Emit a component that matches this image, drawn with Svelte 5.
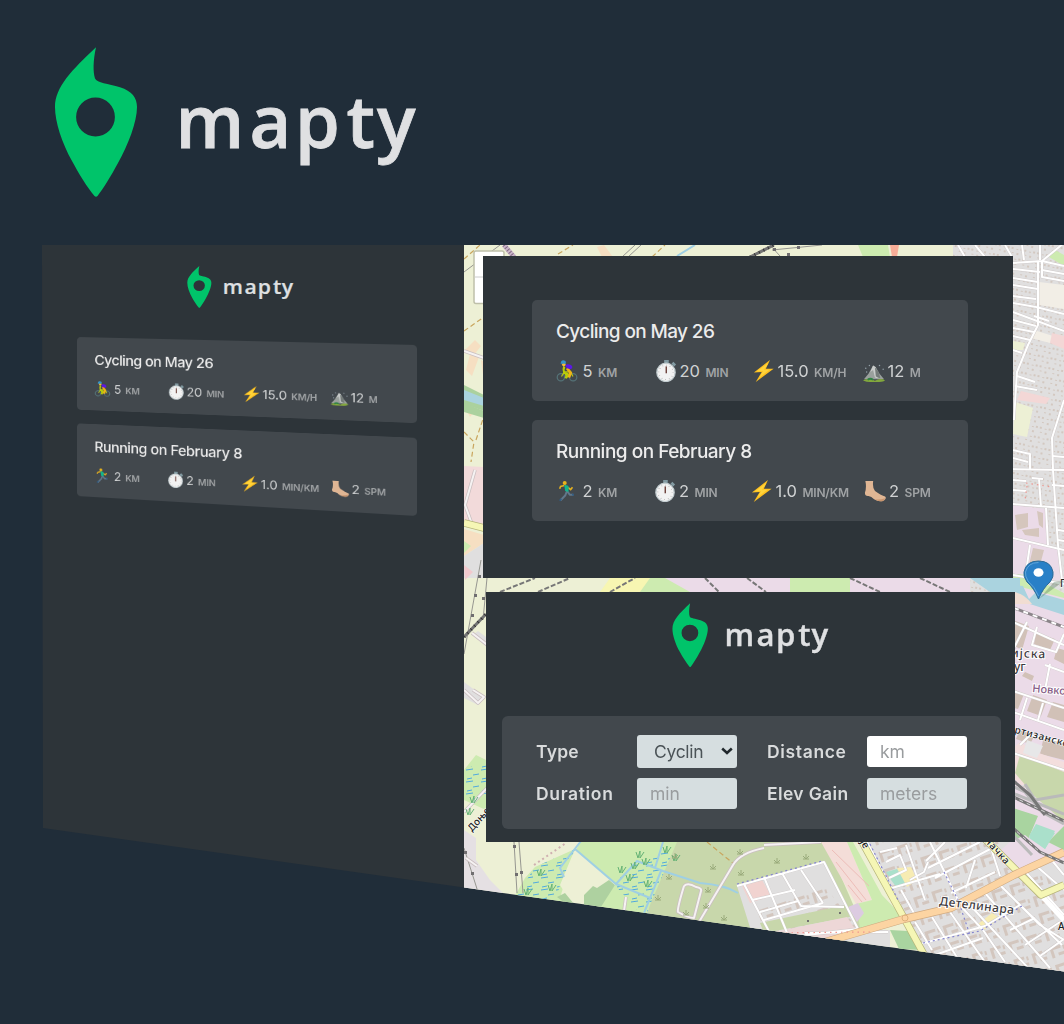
<script>
  const workouts = [
    {
      title: 'Cycling on May 26',
      stats: [
        { icon: 'bike', value: '5', unit: 'km' },
        { icon: 'watch', value: '20', unit: 'min' },
        { icon: 'bolt', value: '15.0', unit: 'km/h' },
        { icon: 'peak', value: '12', unit: 'm' }
      ]
    },
    {
      title: 'Running on February 8',
      stats: [
        { icon: 'run', value: '2', unit: 'km' },
        { icon: 'watch', value: '2', unit: 'min' },
        { icon: 'bolt', value: '1.0', unit: 'min/km' },
        { icon: 'foot', value: '2', unit: 'spm' }
      ]
    }
  ];

  // Minor streets of the map, in map coordinates
  const streets = [
    'M1013 263L1042 261L1064 243M1042 261L1064 266M1038 261L1038 325L1028 345L1017 372L1014 420',
    'M1013 269L1040 272M1013 278L1038 282M1013 285L1038 289M1013 296L1036 299M1013 303L1036 307M1013 312L1064 331M1013 320L1036 326M1013 328L1034 332M1013 336L1030 340M1013 350L1022 353',
    'M1042 262L1042 277L1064 281M1042 270L1064 274M1036 307L1064 314M1034 316L1049 321M1017 376L1035 382M1015 386L1037 390M1064 400L1052 438L1053 470L1058 545L1062 580',
    'M1013 450L1030 454L1030 469M1013 458L1028 462M1005 469L1064 470M1052 456L1064 457M1013 480L1026 481M1013 490L1026 491M1032 478L1043 479M1039 479L1041 507M1013 504L1064 508M1052 485L1064 486M1046 508L1048 545M1013 538L1064 550M1058 530L1064 531M1058 540L1064 541M1013 575L1064 584M1030 545L1026 572',
    'M958 245L965 257M975 245L985 257M1005 245L1012 257M1022 245L1024 260M1040 245L1040 260',
    'M1013 622L1064 645M1037 627L1032 645L1056 652L1064 634M1045 665L1064 672M1050 664L1045 690M1010 690L1064 708M1027 622L1013 650M1013 712L1064 730M1027 698L1020 720M1043 703L1038 720M1010 752L1064 770M1020 745L1030 735L1064 742',
    'M737 886L824 862L858 929L764 940M744 884L784 960M764 877L790 940M782 873L801 906L844 907M801 870L823 903M752 900L795 890M760 912L798 901M764 920L823 903M805 933L888 932',
    'M867 842L900 905M880 852L897 848M886 862L900 855L906 870L889 878M906 845L925 900M892 888L940 874M901 890L915 915L950 906M910 880L924 872L928 862M930 842L958 900M945 842L926 861M928 868L980 842M935 878L994 847M951 893L995 872M966 888L975 860M989 842L1000 876M955 900L983 930L1005 962',
    'M915 922L932 950M932 917L958 959M950 912L987 965M921 944L985 926L1020 905M935 955L983 938M968 903L1030 970M985 893L1050 968M1000 885L1040 925L1064 940M1020 905L1062 945M1010 930L1035 918M1025 945L1060 922M1040 956L1064 939M1024 870L1064 915M1034 864L1064 890M1050 858L1064 875'
  ];

  const marsh = [
    [640, 855], [646, 862], [635, 866], [622, 870], [630, 878], [648, 884], [667, 850], [676, 858], [541, 873], [552, 888], [528, 892], [474, 800], [470, 812]
  ];
  const shrubs = [[675, 856], [713, 867], [740, 852], [741, 873], [669, 877], [658, 898], [708, 890], [706, 906], [724, 918], [777, 861], [806, 857], [686, 913]];
</script>

{#snippet logo(kind)}
  <svg class="logo {kind}" viewBox="0 0 366 152" preserveAspectRatio="none" role="img" aria-label="mapty">
    <path fill="#00c46a" fill-rule="evenodd" d="M42 .3C39 14 39 25 41 31.500C43 36 54 36.500 66 40.300C78 44 83 51 83 60C83 75 74 98 64 116C57 129 49 142 43.500 149Q42 150.500 40.500 149C33 140 25 127 18 114C8 96 1 75 1 60C1 40 18 23 42 .3ZM41.500 50.600a19.400 19.400 0 1 0 0 38.800a19.400 19.400 0 1 0 0-38.800Z" />
    <text x="121.500 195.500 241 292.500 323" y="101.200">mapty</text>
  </svg>
{/snippet}

{#snippet glyph(name)}
  <svg class="glyph" viewBox="0 0 24 24" aria-hidden="true">
    {#if name === 'bike'}
      <g fill="none" stroke="#567479" stroke-width="1.300"><circle cx="5.300" cy="18.800" r="4" /><circle cx="18.700" cy="18.800" r="4" /></g>
      <path d="M6 18L9 13L16 13L18.500 18M9 13L12 19L16 13" fill="none" stroke="#b9c51b" stroke-width="1.300" />
      <path d="M9 7Q7.500 10 9 14L12.500 15L10.500 20" fill="none" stroke="#b9cc08" stroke-width="2.500" stroke-linejoin="round" />
      <path d="M12 9L16 14L14 19" fill="none" stroke="#f0b414" stroke-width="3" />
      <path d="M10 6Q13 3 17 6Q19 8.500 16 10L12 9Z" fill="#5b16e8" />
      <circle cx="8.500" cy="5" r="2" fill="#f5b93e" /><path d="M5 4Q5.500-.5 9 .5Q11.500 1 10.500 4Z" fill="#3596c9" />
    {:else if name === 'run'}
      <path d="M12 12L10 17L5 22M12 12L15 16L19 16" fill="none" stroke="#61778b" stroke-width="2.200" stroke-linejoin="round" />
      <path d="M4 22.500L6 20.500M18 15L19 17" stroke="#2e5e88" stroke-width="1.600" />
      <path d="M9 6L5 7L4 9.500M13 8L16 10.500L18 8" fill="none" stroke="#e2af20" stroke-width="1.800" />
      <path d="M9 5.500Q13 5 14 7.500L13.500 13L10 12Z" fill="#14b38b" />
      <circle cx="9.500" cy="3.200" r="2.200" fill="#e8b31c" />
    {:else if name === 'watch'}
      <path d="M10 0h5v4h-5zM20 2l3 3-2 2-3-3z" fill="#829aa2" />
      <circle cx="12" cy="13.500" r="10" fill="#f2f2f2" stroke="#c4ced1" stroke-width="1.400" />
      <circle cx="12" cy="13.500" r="7.800" fill="none" stroke="#a9a9a9" stroke-width="1.200" stroke-dasharray=".7 3.380" />
      <path d="M12.300 7v7.500" stroke="#70453f" stroke-width="1.600" />
    {:else if name === 'bolt'}
      <path d="M18.500 0L1 13.500L9.500 13L3 24L22.500 9.500L14 9.500Z" fill="#fec01f" />
      <path d="M17 3L4 12.500L11 12L7 19L18 10.500L12 10.500Z" fill="#ffd43b" />
    {:else if name === 'peak'}
      <path d="M1 21L6 15L11 6L14 8L18 15L23 21Z" fill="#9aa09d" />
      <path d="M11 6L8 13L11 11L13 19L16 20L14 8Z" fill="#c9cccb" /><path d="M13 8L14 18L19 20L17 13Z" fill="#747b79" />
      <path d="M0 22Q7 19 13 22.500Q19 19 24 22Q22 24.500 12 24Q2 24 0 22Z" fill="#83a83d" />
      <path d="M5 21.500Q8 19.500 11 21.500" stroke="#2f8243" stroke-width="2" fill="none" />
      <g fill="#93a0a8"><circle cx="3" cy="9" r=".8" /><circle cx="7" cy="6" r=".8" /><circle cx="18" cy="6" r=".8" /><circle cx="22" cy="10" r=".8" /><circle cx="4" cy="13" r=".8" /></g>
    {:else}
      <path d="M1.500 1L10 1Q9 9 12 12Q19 17 23 18Q25 20 22 22Q17 25 11 21Q8 18 5 17.500Q1 18 1 14Q3 8 1.500 1Z" fill="#e0b694" />
      <path d="M12 21Q17 25 22 22L23 20Q17 22 12 21Z" fill="#c9956f" />
    {/if}
  </svg>
{/snippet}

{#snippet workoutList()}
  <ul class="workouts">
    {#each workouts as workout}
      <li class="workout">
        <h2>{workout.title}</h2>
        <div class="stats">
          {#each workout.stats as stat}
            <div class="stat">
              {@render glyph(stat.icon)}
              <span class="value">{stat.value}</span>
              <span class="unit">{stat.unit}</span>
            </div>
          {/each}
        </div>
      </li>
    {/each}
  </ul>
{/snippet}

<main class="page">
  <header class="brand">{@render logo('large')}</header>

  <section class="scene">
    <aside class="sidebar">
      {@render logo('small')}
      <div class="tilted">{@render workoutList()}</div>
    </aside>

    <svg class="map" viewBox="464 245 600 727" aria-label="Map">
      <defs>
        <pattern id="houses" width="13" height="10" patternUnits="userSpaceOnUse" patternTransform="rotate(12)">
          <path d="M1 1h2v2h-2zM6 2h2v1h-2zM10 1h2v2h-2zM2 6h2v1h-2zM7 6h2v2h-2z" fill="#d3c8c0" />
        </pattern>
        <pattern id="blocks" width="19" height="18" patternUnits="userSpaceOnUse" patternTransform="rotate(-18)">
          <path d="M2 2h11v3h-8v8h-3zM9 9h7v3h-7zM15 3h2v4h-2z" fill="#d3c6be" />
        </pattern>
        <pattern id="reeds" width="15" height="12" patternUnits="userSpaceOnUse">
          <path d="M1 2l7-1M8 7l6-1M2 11l5-1" stroke="#4fa9df" stroke-width="1" />
        </pattern>
      </defs>

      <!-- Land cover -->
      <rect x="464" y="245" width="600" height="727" fill="#edf0d5" />
      <path d="M858 245H888L890 257H863Z" fill="#cdebb0" /><path d="M890 245H899L897 257H892Z" fill="#f7ad98" />
      <path d="M597 247L604 245L613 257H602ZM465 350L475 340L481 346L474 355ZM466 370L470 354L479 357L472 376ZM481 360L484 362V382ZM464 405L483 415L476 410L470 417Z" fill="#f6dfc2" />
      <path d="M464 385L484 395V411L464 404Z" fill="#abd19e" /><path d="M464 403L484 411V418L464 412Z" fill="#abd19e" /><path d="M464 390L484 398V406L464 400Z" fill="#aad3df" />
      <path d="M464 466L484 467V526L464 521Z" fill="#f2dada" /><path d="M464 529L484 535V543L464 556Z" fill="#f6dfc2" />
      <path d="M464 556L484 543V578H464Z" fill="#e0dfdf" /><path d="M464 541L471 546L464 553Z" fill="#cdebb0" /><path d="M464 565L473 572L465 580Z" fill="#f2c9cd" />
      <path d="M473 635L478 631L490 640V650ZM464 682L484 697L478 705L464 698Z" fill="#e0dfdf" />
      <path d="M953 245H1064V972H953Z" fill="#e0dfdf" /><path d="M953 245H1064V972H953Z" fill="url(#houses)" />
      <path d="M1039 282L1064 285V309L1039 305ZM1034 330L1053 336L1050 343L1031 338Z" fill="#f2eee6" />
      <path d="M1052 333L1064 336V349L1050 343ZM1021 391L1050 398L1046 404L1017 400Z" fill="#f3d7d6" />
      <path d="M1015 402L1033 408L1027 437L1013 434ZM1013 341L1025 343L1023 350H1013Z" fill="#edf0d5" />
      <path d="M1005 504L1046 509L1048 545L1058 548L1064 580H1005Z" fill="#ebdbe8" />
      <path d="M1055 250L1064 255V266L1049 257Z" fill="#cdebb0" />
      <path d="M1015 515L1028 513V527L1017 530ZM1037 511L1043 513V528L1039 525ZM1022 530L1039 528V537L1025 535ZM1033 548L1044 550L1040 565H1029Z" fill="#d5c6bd" />
      <path d="M1005 578L1064 592V770H1005Z" fill="#ebdbe8" />
      <path d="M1005 573L1028 575L1064 593V598L1005 583Z" fill="#cdebb0" />
      <path d="M1005 584L1023 586L1029 599L1036 592L1064 600V615L1005 596Z" fill="#aad3df" />
      <path d="M1013 592Q1024 593 1032 604L1013 604Z" fill="#f1ddd2" />
      <g fill="#d1c1b7">
        <path d="M1013 620L1029 626L1022 650L1013 645ZM1036 633L1055 639L1050 650L1034 644ZM1057 648L1064 650V664L1054 659ZM1015 690L1024 694L1018 709L1010 707ZM1033 695L1047 700L1041 716L1027 711ZM1053 702L1064 705V722L1047 717ZM1020 730L1035 735L1030 744L1016 739ZM1044 736L1064 742V760L1040 754Z" />
        <path d="M1025 672L1034 676L1032 681L1022 676ZM1015 768L1025 773L1021 778L1012 773Z" />
      </g>
      <path d="M1013 748L1020 742L1036 752L1064 762V785H1013Z" fill="#f3dedd" />
      <path d="M1027 740L1043 746L1037 758L1023 753Z" fill="#e7e7e8" />
      <path d="M1020 755L1064 772V826L1038 800L1015 773Z" fill="#c8d7ab" />
      <path d="M1010 775L1064 822V865H1010Z" fill="#ebdbe8" />
      <path d="M1013 808L1038 816L1027 842L1013 850ZM1048 842L1064 850V826Z" fill="#a9d4a0" />
      <path d="M1036 824L1055 831L1045 849L1029 836Z" fill="#aae0cb" />

      <!-- Strip between the panels -->
      <path d="M640 578H760L770 592H600ZM780 578H850V592H770Z" fill="#cdebb0" />
      <path d="M610 578H650L640 592H600Z" fill="#f7f6b2" /><path d="M665 578H790V592H690ZM850 578H970V592H850Z" fill="#ebdbe8" />
      <path d="M970 578H1020V592H990Z" fill="#aad3df" />
      <path d="M500 592L535 578M538 592L570 578M610 592L635 578M705 578L719 592M747 578L766 592M850 578L880 592M920 578L950 592" fill="none" stroke="#777" stroke-width="2" stroke-dasharray="5 2" />

      <!-- Southern fields and blocks -->
      <path d="M464 830L476 838V860L490 880L510 900H464Z" fill="#e5e0e3" />
      <path d="M464 770L476 755L486 760V810L464 800Z" fill="#cdebb0" /><path d="M464 770L486 760V800H464Z" fill="url(#reeds)" />
      <path d="M580 842H680L675 860L640 925L590 910L616 884L576 850ZM535 867L575 849L560 885L568 898L553 910H507L525 878Z" fill="#cdebb0" />
      <path d="M575 849L616 884L584 897L560 898Z" fill="#edf0d5" />
      <path d="M636 862L690 842L672 858L646 920L614 884ZM535 867L575 849L560 885L553 910H507Z" fill="url(#reeds)" />
      <path d="M584 903V895L593 886L597 888L609 880L615 885L599 910L584 906ZM557 897L565 893L574 904V910Z" fill="#aed1a0" />
      <path d="M677 842H826L862 925V960H630L650 905Z" fill="#c8d7ab" />
      <path d="M737 886L824 862L858 929L890 930V972H764Z" fill="#e0dfdf" />
      <path d="M742 886L762 880L771 896L750 903Z" fill="#f1d3d0" /><path d="M752 905L824 885L858 929L770 945Z" fill="url(#blocks)" />
      <path d="M760 923L846 905L850 917L764 933Z" fill="#c8d7ab" /><path d="M775 932L847 917L855 929L820 945Z" fill="#edd7d7" />
      <path d="M821 842H847L872 900L856 904Z" fill="#f4ddd8" />
      <path d="M847 842H853L882 895L903 917L860 928L856 904L872 900Z" fill="#cdebb0" />
      <path d="M867 842H1012L1055 865L1064 860V972H930L904 915Z" fill="#e0dfdf" /><path d="M867 842H1012L1064 895V972H930L904 915Z" fill="url(#blocks)" />
      <path d="M1010 842L1025 835L1050 855L1012 872L995 855Z" fill="#ebdbe8" />
      <path d="M1036 828L1055 833L1045 849L1029 838Z" fill="#aae0cb" />
      <path d="M886 872L897 869L907 884L897 888L891 880Z" fill="#aae0cb" /><path d="M897 868L911 867L917 880L907 887Z" fill="#f7ecb3" />
      <path d="M978 924L992 913L1000 918L984 930Z" fill="#f7ecb3" />
      <path d="M890 930L908 931L922 950L899 949Z" fill="#a9d4a0" />
      <path d="M848 907L858 903L864 913L857 922Z" fill="#dccbe1" />
      <path d="M832 850L869 886M836 862L866 900M848 885L862 902" fill="none" stroke="#edbdb8" />

      <!-- Waterways and paths -->
      <path d="M581 841L560 868L564 877M575 849L616 884L637 861L663 871L700 883Q725 885 738 893M616 884L650 898M663 842L655 868M661 871L644 913M677 256L695 245" fill="none" stroke="#9fcfe3" stroke-width="2" />
      <path d="M464 331L484 317M464 259L480 245M558 254L573 245M652 257L665 245M707 842L734 864M464 432L474 442L471 462M476 440L483 419" fill="none" stroke="#c9a55d" stroke-width="1.200" stroke-dasharray="5 3" />
      <path d="M534 865L566 843" stroke="#cfafb0" stroke-width="2" stroke-dasharray="2 3" />
      <path d="M464 272L500 245M622 257L635 245M628 257L641 245M770 245L780 256M772 250L822 245M464 654L481 560M483 620L487 578M514 842L517 893M519 842L523 893M464 848L478 892" fill="none" stroke="#969690" stroke-width="1" />
      <g fill="#706e70"><path d="M773 248h3v3h-3zM797 246h3v3h-3zM787 253h3v3h-3zM478 575h3v3h-3zM474 594h3v3h-3zM471 614h3v3h-3zM482 597h3v3h-3zM513 845h3v3h-3zM515 873h3v3h-3zM520 871h3v3h-3zM464 851h3v3h-3zM471 872h3v3h-3zM807 920h2v2h-2zM839 912h2v2h-2z" /></g>
      <path d="M750 257L774 245M464 637L486 614" stroke="#747474" stroke-width="3" /><path d="M750 257L774 245M464 637L486 614" stroke="#333" stroke-width="3" stroke-dasharray="1 4" />
      <path d="M504 245L514 257" stroke="#cab4c8" stroke-width="5" /><path d="M504 245L514 257" stroke="#806a80" stroke-width="4" stroke-dasharray="1 2" />
      <g fill="none" stroke-linejoin="round">
        <path d="M464 351L484 358M475 470L465 505L472 524M473 690L484 697L478 703L464 690M472 633L490 647M464 812L490 785M466 858L477 866M684 886Q688 882 696 887Q702 888 701 891L694 918Q688 918 678 912Q677 909 684 886M764 848Q740 853 733 865L699 922M764 845L821 842M626 897L624 911" stroke="#cabfc0" stroke-width="3.500" />
        <path d="M464 351L484 358M475 470L465 505L472 524M473 690L484 697L478 703L464 690M472 633L490 647M464 812L490 785M466 858L477 866M684 886Q688 882 696 887Q702 888 701 891L694 918Q688 918 678 912Q677 909 684 886M764 848Q740 853 733 865L699 922M764 845L821 842M626 897L624 911" stroke="#f5f2f2" stroke-width="2" />
        {#each streets as d}
          <path {d} stroke="#cfcaca" stroke-width="2.800" />
        {/each}
        {#each streets as d}
          <path {d} stroke="#fff" stroke-width="2" />
        {/each}
        <path d="M1064 920L1041 895" stroke="#fff" stroke-width="5" />
        <path d="M464 523L484 528M861 840L904 918L927 960M984 838L1041 895L1064 885" stroke="#b6b579" stroke-width="7.500" />
        <path d="M464 523L484 528M861 840L904 918L927 960M984 838L1041 895L1064 885" stroke="#f5f6b5" stroke-width="6" />
        <path d="M825 942L904 919L951 908L1014 875L1064 852" stroke="#d0aa80" stroke-width="8" />
        <path d="M825 942L904 919L951 908L1014 875L1064 852" stroke="#fcd4a2" stroke-width="6.800" />
        <circle cx="905" cy="918" r="3" stroke="#dfb27c" />
        <path d="M1010 785L1025 792L1042 812L1064 824M1010 792L1064 814M1025 784L1035 800L1064 795M1010 832L1032 855" stroke="#bababa" stroke-width="3" />
        <path d="M1005 793L1064 821M1005 821L1040 852L1064 863M1010 778L1030 795L1045 815" stroke="#777" stroke-width="3" /><path d="M1005 793L1064 821M1005 821L1040 852L1064 863" stroke="#d7d7d7" stroke-dasharray="4 4" />
        <path d="M1014 608L1064 627" stroke="#8b8589" stroke-width="3" /><path d="M1014 608L1064 627" stroke="#fff" stroke-width="2" stroke-dasharray="5 5" />
        <path d="M870 844L898 900M944 872L958 900L970 935M923 943L980 931L1022 906M737 884L822 861" stroke="#8585cf" stroke-width="1.200" stroke-dasharray="2 3" />
        <path d="M1026 483L1052 487M1027 486L1025 500M764 933L870 932" stroke="#ee9690" stroke-width="1.200" stroke-dasharray="1.500 4" />
      </g>
      {#each marsh as [x, y]}
        <path d="M{x - 4} {y - 3}L{x - 2} {y + 3}L{x} {y - 4}V{y + 3}L{x + 4} {y - 3}" fill="none" stroke="#64b275" />
      {/each}
      {#each shrubs as [x, y]}
        <path d="M{x - 3} {y - 1}L{x} {y + 2}V{y - 3}M{x} {y + 2}L{x + 3} {y - 1}M{x - 3} {y + 2}H{x + 3}" fill="none" stroke="#99aa7b" />
      {/each}

      <!-- Place names -->
      <g class="labels">
        <text transform="translate(939 905) rotate(7)" textLength="75">Детелинара</text>
        <text class="road" transform="translate(984 841) rotate(48)" textLength="32">начка</text>
        <text class="road" transform="translate(860 842) rotate(60)">је</text>
        <text class="road" transform="translate(1008 731) rotate(15)" textLength="62">артизанско</text>
        <text class="road" transform="translate(472 832) rotate(-48)">Доње с</text>
        <text x="1011" y="657" transform="rotate(2 1011 657)" textLength="34">ијска</text>
        <text x="1014" y="671">уг</text>
        <text class="area" transform="translate(1032 692) rotate(5)">Новко</text>
        <text class="road" x="1060" y="587">П</text><text class="road" x="1058" y="930">А</text>
      </g>

      <!-- Zoom control and marker -->
      <rect x="474" y="251" width="30" height="52.500" rx="2" fill="#fff" stroke="#bfc0aa" stroke-width="1.500" /><path d="M475 277H503" stroke="#ccc" />
      <path d="M1039 599L1064 581L1054 582Z" fill="#4e7555" opacity=".35" />
      <path d="M1038.500 599Q1034 588 1027 582Q1023 576 1024 572Q1026 561 1038.500 561Q1051 561 1053 572Q1054 577 1050 582Q1043 588 1038.500 599Z" fill="#2980c7" stroke="#2e6c97" />
      <path d="M1038.500 596Q1035 587 1028 581Q1025 576 1025.500 572Q1028 562.500 1038.500 562.500" fill="none" stroke="#5fa5d9" />
      <ellipse cx="1038.500" cy="572.500" rx="5" ry="4.300" fill="#fff" />
    </svg>
  </section>

  <section class="panel list-panel">{@render workoutList()}</section>

  <section class="panel form-panel">
    {@render logo('medium')}
    <form class="form">
      <label for="type">Type</label>
      <div class="select">
        <select id="type"><option>Cyclin</option></select>
        <svg viewBox="0 0 12 8" aria-hidden="true"><path d="M1.200 1.500L6 6L10.800 1.500" fill="none" stroke="#20282c" stroke-width="2.500" /></svg>
      </div>
      <label for="distance">Distance</label>
      <input id="distance" class="active" placeholder="km" />
      <label for="duration">Duration</label>
      <input id="duration" placeholder="min" />
      <label for="gain">Elev Gain</label>
      <input id="gain" placeholder="meters" />
    </form>
  </section>
</main>

<style>
  :global(body) { margin: 0; background: #202d39; }
  .page {
    position: relative;
    width: 1064px;
    height: 1024px;
    overflow: hidden;
    background: #202d39;
    color: #ececec;
    font-family: Inter, "Open Sans", sans-serif;
  }
  .brand { height: 245px; padding: 47px 0 0 54px; box-sizing: border-box; }
  .logo { display: block; overflow: visible; }
  .logo text { font: 600 72px "Open Sans", sans-serif; fill: #dfe0e2; stroke: #dfe0e2; stroke-width: .8px; }
  .large { width: 366px; height: 152px; }
  .small { width: 107.500px; height: 42.500px; margin-left: 145px; }
  .medium { width: 158px; height: 65px; margin-left: 170px; filter: blur(.5px); }

  .scene {
    display: flex;
    width: 1022px;
    height: 727px;
    margin-left: 42px;
    clip-path: polygon(0 0, 100% 0, 100% 726.500px, 422px 642.500px, 1px 583px);
  }
  .sidebar { width: 422px; padding-top: 21px; box-sizing: border-box; background: #2d3439; }
  .map { display: block; width: 600px; height: 727px; }
  .tilted { width: 340px; height: 159px; margin: 28.500px 0 0 35px; }
  .tilted .workouts {
    transform-origin: 0 0;
    transform: matrix3d(.7251, .01706, 0, -.000161, 0, .7195, 0, 0, 0, 0, 1, 0, 0, 0, 0, 1);
  }

  .workouts {
    display: flex;
    flex-direction: column;
    gap: 19px;
    width: 436px;
    margin: 0;
    padding: 0;
    list-style: none;
  }
  .workout { height: 101px; padding: 19px 0 0 24px; box-sizing: border-box; border-radius: 5px; background: #42484d; }
  h2 { margin: 0; font-size: 19px; line-height: 25px; font-weight: 500; letter-spacing: -.62px; }
  .workout:nth-child(2) h2 { letter-spacing: -.5px; }
  .stats { display: grid; grid-template-columns: 98.500px 98px 110px 1fr; margin-top: 15px; }
  .workout:nth-child(2) .stats { grid-template-columns: 98px 96.500px 113.500px 1fr; }
  .stat { display: flex; align-items: baseline; height: 24px; line-height: 24px; white-space: nowrap; }
  .glyph { width: 22px; height: 22px; margin-right: 3px; align-self: center; flex: none; }
  .stat:first-child .glyph { margin-right: 4.500px; }
  .value { font-size: 16.500px; color: #d0d2d3; }
  .unit { margin-left: 5.500px; font-size: 12px; font-weight: 600; letter-spacing: -.2px; color: #a0a3a5; text-transform: uppercase; }

  .panel { position: absolute; background: #2d3439; box-sizing: border-box; }
  .list-panel { left: 483px; top: 256px; width: 530px; height: 322px; padding: 44px 49px; }
  .list-panel .workouts { filter: blur(.3px); }
  .form-panel { left: 486px; top: 592px; width: 529px; height: 250px; padding: 11px 14px 13px 16px; }
  .form {
    display: grid;
    grid-template-columns: 101px 100px 130px 100px;
    grid-template-rows: 33px 31px;
    row-gap: 9.500px;
    align-items: center;
    height: 113px;
    margin-top: 48px;
    padding: 19px 0 0 34px;
    box-sizing: border-box;
    border-radius: 6px;
    background: #42484d;
    filter: blur(.5px);
  }
  .form label { font-size: 17.500px; font-weight: 600; letter-spacing: .65px; color: #d9dbdc; }
  .form label[for='type'] { letter-spacing: .2px; }
  .form label[for='distance'], .form label[for='gain'] { margin-left: 30px; }
  .form label[for='gain'] { letter-spacing: .35px; }
  input, select {
    width: 100px;
    height: 31px;
    padding: 0 13px;
    box-sizing: border-box;
    border: 0;
    border-radius: 3px;
    outline: 0;
    background: #d6dee0;
    color: #4b5357;
    font: 400 17.500px Inter, sans-serif;
  }
  input.active { background: #fff; }
  input::placeholder { color: #999c9e; opacity: 1; }
  .select { position: relative; height: 33px; }
  select { height: 33px; padding-left: 17px; appearance: none; letter-spacing: -.3px; }
  .select svg { position: absolute; right: 4px; top: 12px; width: 12px; height: 8px; }

  .labels text {
    font: 500 12px "Noto Sans", sans-serif;
    fill: #3f3b40;
    stroke: #fff;
    stroke-width: 2px;
    paint-order: stroke;
  }
  .labels .road { font-size: 10px; fill: #222; stroke-width: 1px; }
  .labels .area { font-size: 11px; fill: #865c86; }
</style>
